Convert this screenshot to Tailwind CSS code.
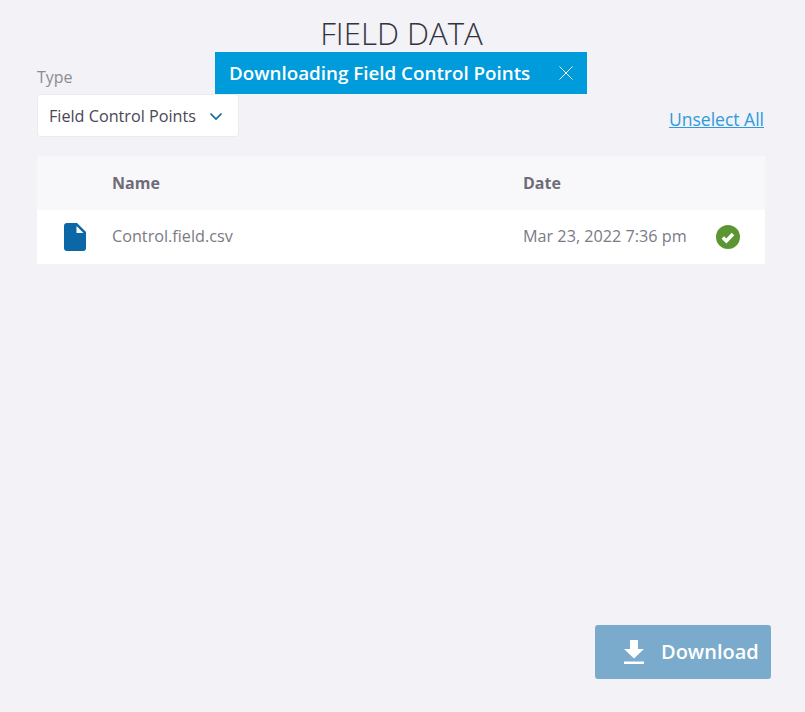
<!DOCTYPE html>
<html lang="en">

<head>
  <meta charset="UTF-8" />
  <meta name="viewport" content="width=device-width, initial-scale=1.0" />
  <title>Field Data</title>
  <script src="https://cdn.jsdelivr.net/npm/@tailwindcss/browser@4"></script>
</head>

<body class="bg-[#f2f2f7] font-['Open_Sans',sans-serif] overflow-hidden">
  <div class="relative h-[712px] flex flex-col pl-[37px] pr-[34px] pb-[33px]">
    <!-- toast -->
    <div class="absolute left-[215px] top-[52px] w-[372px] h-[42px] bg-[#009bdb] text-white flex items-center pl-[14px]">
      <span class="text-[18.8px] font-semibold whitespace-nowrap">Downloading Field Control Points</span>
      <svg class="absolute left-[344px] top-[14px]" width="14" height="14" viewBox="0 0 14 14" fill="none" stroke="white" stroke-width="1">
        <path d="M0.5 0.5L13.5 13.5M13.5 0.5L0.5 13.5" />
      </svg>
    </div>

    <h1 class="text-[31.2px] leading-[40px] pt-[13px] font-light text-center text-[#33333f] -ml-[5px] h-[54px]">FIELD DATA</h1>

    <div class="flex justify-between items-end mt-[13px] w-[728px]">
      <div>
        <label class="block text-[16px] leading-[20px] text-[#8f8a90] mb-[7px]">Type</label>
        <div class="w-[202px] h-[43px] bg-white border border-[#ebebf0] rounded-[3px] flex items-center justify-between pl-[11px] pr-[15px] pt-[1px]">
          <span class="text-[16.2px] text-[#4a4656]">Field Control Points</span>
          <svg width="14" height="9" viewBox="0 0 14 9" fill="none" stroke="#0b679f" stroke-width="1.6">
            <path d="M1.5 1.5L7 7L12.5 1.5" />
          </svg>
        </div>
      </div>
      <a class="text-[17.5px] leading-[24px] text-[#2d9bdb] underline mb-[6px] mr-[1px]">Unselect All</a>
    </div>

    <div class="mt-[19px] w-[728px]">
      <div class="h-[54px] bg-[#f8f8fb] flex items-center text-[16px] font-bold text-[#6f6c79]">
        <span class="ml-[75px] w-[411px]">Name</span>
        <span>Date</span>
      </div>
      <div class="h-[54px] bg-white flex items-center text-[16.2px] text-[#7b7a85]">
        <svg class="ml-[27px]" width="22" height="28" viewBox="0 0 22 28">
          <path fill="#0b67a5" d="M3 0H13L22 9V25a3 3 0 0 1-3 3H3a3 3 0 0 1-3-3V3a3 3 0 0 1 3-3Z" />
          <path fill="white" d="M12.5 3L19.5 10H12.5Z" />
        </svg>
        <span class="ml-[26px] w-[411px] pb-[2px]">Control.field.csv</span>
        <span class="w-[193px] whitespace-nowrap pb-[2px]">Mar 23, 2022 7:36 pm</span>
        <svg width="24" height="24" viewBox="0 0 24 24">
          <circle cx="12" cy="12" r="12" fill="#5c9632" />
          <path d="M6.8 12.4L10.4 16L17 9" fill="none" stroke="white" stroke-width="3.5" />
        </svg>
      </div>
    </div>

    <div class="mt-auto flex justify-end">
      <button class="w-[176px] h-[54px] bg-[#7aaacc] rounded-[3px] flex items-center pl-[28px] text-white">
        <svg width="22" height="25" viewBox="0 0 22 25" fill="white">
          <path d="M7 0H15V9H21L11 18.5L1 9H7Z" />
          <rect x="1" y="21.5" width="20" height="2.5" />
        </svg>
        <span class="ml-[16px] text-[20px] font-semibold">Download</span>
      </button>
    </div>
  </div>
</body>

</html>
